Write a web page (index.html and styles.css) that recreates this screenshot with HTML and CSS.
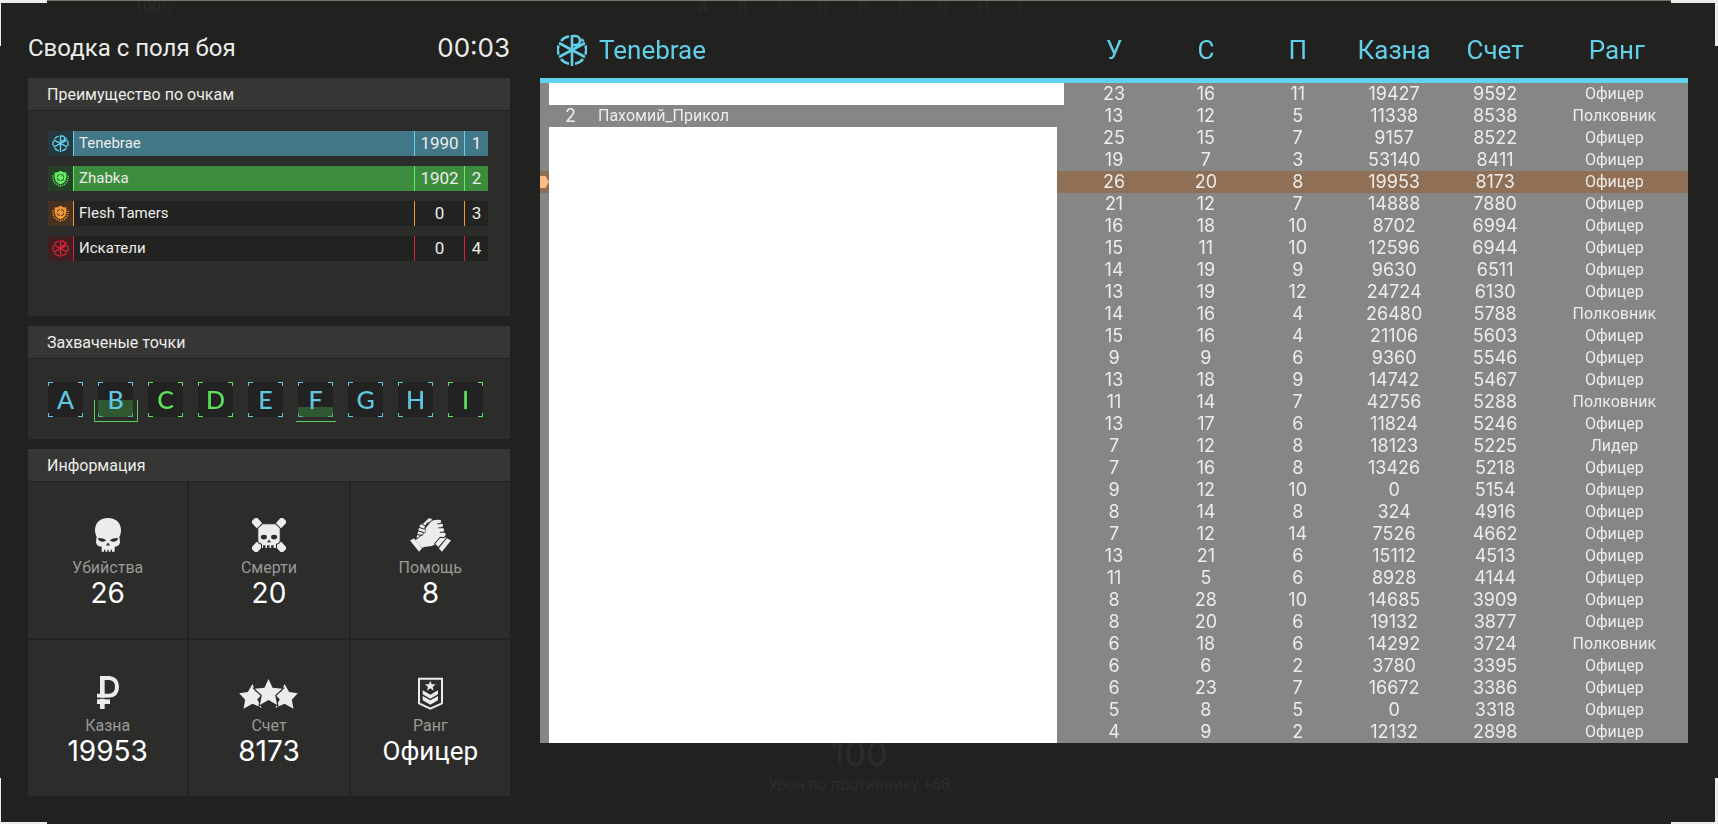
FILE: index.html
```html
<!DOCTYPE html>
<html lang="ru">
<head>
<meta charset="utf-8">
<title>Сводка с поля боя</title>
<meta name="viewport" content="width=device-width, initial-scale=1">
<link rel="stylesheet" href="styles.css">
</head>
<body>
<svg class="defs" aria-hidden="true">
  <symbol id="emblem" viewBox="0 0 30 32">
    <g fill="none" stroke="currentColor" stroke-width="2.6">
      <path d="M12 2.200A14 14 0 0 0 4 7M1.600 11.500A14 14 0 0 0 1.600 20.500M4 25A14 14 0 0 0 12 29.800M18 29.800A14 14 0 0 0 26 25M28.400 20.500A14 14 0 0 0 28.400 11.500M26.500 7.500L24.500 5.200"/>
      <path d="M15 1V32M15 2H18.500A4.500 4.500 0 0 1 18.500 11H15M2 9L28 23M28 9L2 23"/>
    </g>
  </symbol>
  <symbol id="shield" viewBox="0 0 26 26">
    <path fill="currentColor" fill-rule="evenodd" d="M13 1Q17 4 22 4V12Q21 19 13 22Q5 19 4 12V4Q9 4 13 1ZM13 6A5.500 5.500 0 1 0 13 17A5.500 5.500 0 1 0 13 6ZM13 7.300A4.200 4.200 0 1 1 13 15.700A4.200 4.200 0 1 1 13 7.300Z"/>
    <path fill="none" stroke="currentColor" stroke-width="1.500" d="M13 5V9M13 14V18M7 11.500H10.500M15.500 11.500H19"/>
    <circle cx="13" cy="11.500" r="2" fill="currentColor"/>
    <path fill="none" stroke="currentColor" stroke-width="2" stroke-dasharray="2 1.500" d="M1.500 8Q0 21 13 24.500Q26 21 24.500 8"/>
  </symbol>
</svg>

<div class="frame" aria-hidden="true"><i></i><i></i><i></i><i></i></div>
<div class="backdrop" aria-hidden="true"><b>100%</b><span>A</span><span>B</span><span>C</span><span>D</span><span>E</span><span>F</span><span>G</span><span>H</span><span>I</span></div>

<div class="layout">
  <aside class="summary">
    <header class="summary-head"><h1>Сводка с поля боя</h1><time>00:03</time></header>

    <section class="panel">
      <h2>Преимущество по очкам</h2>
      <ol class="clans">
        <li class="clan blue filled"><svg class="clan-icon"><use href="#emblem"/></svg><span class="clan-name">Tenebrae</span><span class="clan-score">1990</span><span class="clan-place">1</span></li>
        <li class="clan green filled"><svg class="clan-icon"><use href="#shield"/></svg><span class="clan-name">Zhabka</span><span class="clan-score">1902</span><span class="clan-place">2</span></li>
        <li class="clan orange"><svg class="clan-icon"><use href="#shield"/></svg><span class="clan-name">Flesh Tamers</span><span class="clan-score">0</span><span class="clan-place">3</span></li>
        <li class="clan red"><svg class="clan-icon"><use href="#emblem"/></svg><span class="clan-name">Искатели</span><span class="clan-score">0</span><span class="clan-place">4</span></li>
      </ol>
    </section>

    <section class="panel">
      <h2>Захваченые точки</h2>
      <ul class="points">
        <li class="point blue">A</li>
        <li class="point blue contested half">B</li>
        <li class="point green">C</li>
        <li class="point green">D</li>
        <li class="point blue">E</li>
        <li class="point blue contested third">F</li>
        <li class="point blue">G</li>
        <li class="point blue">H</li>
        <li class="point green">I</li>
      </ul>
    </section>

    <section class="panel info">
      <h2>Информация</h2>
      <dl class="stats">
        <div class="stat">
          <svg width="26" height="34" viewBox="0 0 78 102"><path fill="currentColor" fill-rule="evenodd" d="M39 0C14 0 0 16 0 37C0 46 3 51 5 57L3 69Q3 82 12 85L20 86V101H27V95H31V101H37V95H41V101H47V95H51V101H59V86L66 85Q75 82 75 69L73 57C76 51 78 46 78 37C78 16 64 0 39 0ZM9 60Q24 59 34 67Q29 72 21 71Q10 70 9 60ZM69 60Q54 59 44 67Q49 72 57 71Q68 70 69 60ZM39 73L45 83H41L39 80L37 83H33Z"/></svg>
          <dt>Убийства</dt><dd>26</dd>
        </div>
        <div class="stat">
          <svg width="34" height="34" viewBox="0 0 100 100"><g fill="currentColor"><rect x="3" y="0" width="22" height="30" rx="8" transform="rotate(-42 14 14)"/><rect x="75" y="0" width="22" height="30" rx="8" transform="rotate(42 86 14)"/><rect x="3" y="70" width="22" height="30" rx="8" transform="rotate(42 14 86)"/><rect x="75" y="70" width="22" height="30" rx="8" transform="rotate(-42 86 86)"/><path fill-rule="evenodd" stroke="#2c2c2a" stroke-width="3" d="M30 17H70L83 30V66Q82 75 72 77V90H62V82H58V90H50V82H46V90H38V82H34V90H28V77Q18 75 17 66V30Z"/></g><g fill="#2c2c2a"><ellipse cx="35" cy="56" rx="9" ry="7"/><ellipse cx="65" cy="56" rx="9" ry="7"/><path d="M50 64L56 71H44Z"/></g></svg>
          <dt>Смерти</dt><dd>20</dd>
        </div>
        <div class="stat">
          <svg width="41" height="34" viewBox="0 0 122 101"><g fill="currentColor"><path d="M0 67L12 60L36 90L27 100ZM122 67L110 60L86 90L95 100Z"/><path d="M20 56L27 28Q29 17 40 16L54 2Q62 -2 66 6L52 15L42 31L46 41L20 60Z"/><path d="M16 66L47 42L46 31L61 12Q70 3 91 6Q96 12 88 16L97 18Q101 24 93 28L100 31Q104 38 98 41L105 45Q109 51 101 55L108 59L84 86L76 77L65 83L42 86L36 89Z"/></g><path fill="none" stroke="#2c2c2a" stroke-width="3" d="M24 27L42 33M22 38L41 43M20 49L37 52M35 18L47 24M52 14L44 30M81 17L91 17M85 29L97 29M89 42L101 42M72 78L90 57L104 59"/></svg>
          <dt>Помощь</dt><dd>8</dd>
        </div>
        <div class="stat">
          <svg width="22" height="34" viewBox="0 0 66 102"><g fill="none" stroke="currentColor"><path stroke-width="14" d="M16 0V99"/><path stroke-width="12" d="M10 6H38Q60 9 60 32Q60 57 36 59H0"/><path stroke-width="14" d="M0 77H39"/></g><path d="M0 67H40" stroke="#2c2c2a" stroke-width="3"/></svg>
          <dt>Казна</dt><dd>19953</dd>
        </div>
        <div class="stat">
          <svg width="59" height="34" viewBox="0 -10 176 102"><g fill="currentColor"><path d="M40 14L48 36L72 43L54 60L68 86L40 73L13 88L18 61L0 42L26 38ZM136 14L128 36L104 43L122 60L108 86L136 73L163 88L158 61L176 42L150 38Z"/><path stroke="#2c2c2a" stroke-width="7" paint-order="stroke" d="M88 -1L100 25L129 28L108 48L114 77L88 62L62 77L68 48L47 28L76 25Z"/></g></svg>
          <dt>Счет</dt><dd>8173</dd>
        </div>
        <div class="stat">
          <svg width="25" height="34" viewBox="0 -5 75 102"><path fill="none" stroke="currentColor" stroke-width="6" d="M3 3H72V77L37 93L3 77Z"/><path fill="currentColor" d="M37 9L41 20H53L44 28L47 39L37 32L27 39L30 28L21 20H33ZM14 38L37 51L60 38V50L37 63L14 50ZM14 55L37 68L60 55V68L37 81L14 68Z"/></svg>
          <dt>Ранг</dt><dd class="word">Офицер</dd>
        </div>
      </dl>
    </section>
  </aside>

  <main class="board">
    <table class="scores">
      <colgroup><col class="c-mark"><col class="c-no"><col class="c-name"><col class="c-num"><col class="c-num"><col class="c-num"><col class="c-wide"><col class="c-wide"><col class="c-rank"></colgroup>
      <thead>
        <tr><th colspan="3" scope="col" class="team"><div><svg width="30" height="32"><use href="#emblem"/></svg>Tenebrae</div></th><th scope="col">У</th><th scope="col">С</th><th scope="col">П</th><th scope="col">Казна</th><th scope="col">Счет</th><th scope="col">Ранг</th></tr>
      </thead>
      <tbody>
        <tr><td></td><td colspan="2"><div class="blank long"></div></td><td>23</td><td>16</td><td>11</td><td>19427</td><td>9592</td><td class="rank">Офицер</td></tr>
        <tr><td></td><td>2</td><td class="name">Пахомий_Прикол</td><td>13</td><td>12</td><td>5</td><td>11338</td><td>8538</td><td class="rank">Полковник</td></tr>
        <tr><td></td><td colspan="2"><div class="blank"></div></td><td>25</td><td>15</td><td>7</td><td>9157</td><td>8522</td><td class="rank">Офицер</td></tr>
        <tr><td></td><td colspan="2"><div class="blank"></div></td><td>19</td><td>7</td><td>3</td><td>53140</td><td>8411</td><td class="rank">Офицер</td></tr>
        <tr class="me"><td><div class="marker"></div></td><td colspan="2"><div class="blank"></div></td><td>26</td><td>20</td><td>8</td><td>19953</td><td>8173</td><td class="rank">Офицер</td></tr>
        <tr><td></td><td colspan="2"><div class="blank"></div></td><td>21</td><td>12</td><td>7</td><td>14888</td><td>7880</td><td class="rank">Офицер</td></tr>
        <tr><td></td><td colspan="2"><div class="blank"></div></td><td>16</td><td>18</td><td>10</td><td>8702</td><td>6994</td><td class="rank">Офицер</td></tr>
        <tr><td></td><td colspan="2"><div class="blank"></div></td><td>15</td><td>11</td><td>10</td><td>12596</td><td>6944</td><td class="rank">Офицер</td></tr>
        <tr><td></td><td colspan="2"><div class="blank"></div></td><td>14</td><td>19</td><td>9</td><td>9630</td><td>6511</td><td class="rank">Офицер</td></tr>
        <tr><td></td><td colspan="2"><div class="blank"></div></td><td>13</td><td>19</td><td>12</td><td>24724</td><td>6130</td><td class="rank">Офицер</td></tr>
        <tr><td></td><td colspan="2"><div class="blank"></div></td><td>14</td><td>16</td><td>4</td><td>26480</td><td>5788</td><td class="rank">Полковник</td></tr>
        <tr><td></td><td colspan="2"><div class="blank"></div></td><td>15</td><td>16</td><td>4</td><td>21106</td><td>5603</td><td class="rank">Офицер</td></tr>
        <tr><td></td><td colspan="2"><div class="blank"></div></td><td>9</td><td>9</td><td>6</td><td>9360</td><td>5546</td><td class="rank">Офицер</td></tr>
        <tr><td></td><td colspan="2"><div class="blank"></div></td><td>13</td><td>18</td><td>9</td><td>14742</td><td>5467</td><td class="rank">Офицер</td></tr>
        <tr><td></td><td colspan="2"><div class="blank"></div></td><td>11</td><td>14</td><td>7</td><td>42756</td><td>5288</td><td class="rank">Полковник</td></tr>
        <tr><td></td><td colspan="2"><div class="blank"></div></td><td>13</td><td>17</td><td>6</td><td>11824</td><td>5246</td><td class="rank">Офицер</td></tr>
        <tr><td></td><td colspan="2"><div class="blank"></div></td><td>7</td><td>12</td><td>8</td><td>18123</td><td>5225</td><td class="rank">Лидер</td></tr>
        <tr><td></td><td colspan="2"><div class="blank"></div></td><td>7</td><td>16</td><td>8</td><td>13426</td><td>5218</td><td class="rank">Офицер</td></tr>
        <tr><td></td><td colspan="2"><div class="blank"></div></td><td>9</td><td>12</td><td>10</td><td>0</td><td>5154</td><td class="rank">Офицер</td></tr>
        <tr><td></td><td colspan="2"><div class="blank"></div></td><td>8</td><td>14</td><td>8</td><td>324</td><td>4916</td><td class="rank">Офицер</td></tr>
        <tr><td></td><td colspan="2"><div class="blank"></div></td><td>7</td><td>12</td><td>14</td><td>7526</td><td>4662</td><td class="rank">Офицер</td></tr>
        <tr><td></td><td colspan="2"><div class="blank"></div></td><td>13</td><td>21</td><td>6</td><td>15112</td><td>4513</td><td class="rank">Офицер</td></tr>
        <tr><td></td><td colspan="2"><div class="blank"></div></td><td>11</td><td>5</td><td>6</td><td>8928</td><td>4144</td><td class="rank">Офицер</td></tr>
        <tr><td></td><td colspan="2"><div class="blank"></div></td><td>8</td><td>28</td><td>10</td><td>14685</td><td>3909</td><td class="rank">Офицер</td></tr>
        <tr><td></td><td colspan="2"><div class="blank"></div></td><td>8</td><td>20</td><td>6</td><td>19132</td><td>3877</td><td class="rank">Офицер</td></tr>
        <tr><td></td><td colspan="2"><div class="blank"></div></td><td>6</td><td>18</td><td>6</td><td>14292</td><td>3724</td><td class="rank">Полковник</td></tr>
        <tr><td></td><td colspan="2"><div class="blank"></div></td><td>6</td><td>6</td><td>2</td><td>3780</td><td>3395</td><td class="rank">Офицер</td></tr>
        <tr><td></td><td colspan="2"><div class="blank"></div></td><td>6</td><td>23</td><td>7</td><td>16672</td><td>3386</td><td class="rank">Офицер</td></tr>
        <tr><td></td><td colspan="2"><div class="blank"></div></td><td>5</td><td>8</td><td>5</td><td>0</td><td>3318</td><td class="rank">Офицер</td></tr>
        <tr><td></td><td colspan="2"><div class="blank"></div></td><td>4</td><td>9</td><td>2</td><td>12132</td><td>2898</td><td class="rank">Офицер</td></tr>
      </tbody>
    </table>
    <div class="ghost"><span class="ghost-value">100</span><span class="ghost-note">Урон по противнику +68</span></div>
  </main>
</div>
</body>
</html>
```
FILE: styles.css
```css
* { box-sizing: border-box; }

body {
  margin: 0;
  min-height: 100vh;
  background: #21211f;
  color: #ececea;
  font-family: Roboto, "Noto Sans", sans-serif;
  font-size: 16px;
  line-height: 22px;
}

h1, h2, ol, ul, dl, dd { margin: 0; padding: 0; list-style: none; font-weight: 400; }

.defs { position: absolute; width: 0; height: 0; }

.blue { --tone: #62d0ee; --tile: #26383e; --fill: #417787; --mark: #62c8e2; }
.green { --tone: #62ee62; --tile: #264028; --fill: #3c8c3e; --mark: #5ce45c; }
.orange { --tone: #f59638; --tile: #463220; --fill: #222221; }
.red { --tone: #d82238; --tile: #401f22; --fill: #222221; }

/* Screen frame */
.frame { position: fixed; inset: 0; border-top: 1px solid #77766d; pointer-events: none; }
.frame i { position: absolute; width: 47px; height: 46px; border: 0 solid #ececea; }
.frame i:nth-child(1) { top: -1px; left: 0; border-width: 3px 0 0 1px; }
.frame i:nth-child(2) { top: -1px; right: 0; border-width: 3px 3px 0 0; }
.frame i:nth-child(3) { bottom: 0; left: 0; border-width: 0 0 2px 1px; }
.frame i:nth-child(4) { bottom: 0; right: 0; border-width: 0 3px 2px 0; }

.backdrop { position: absolute; top: 0; left: 0; right: 0; height: 18px; display: flex; gap: 29px; padding-left: 134px; color: #2a2a28; font-size: 16px; line-height: 16px; }
.backdrop b { width: 535px; font-weight: 400; }
.backdrop span { width: 11px; }

.layout {
  display: grid;
  grid-template-columns: minmax(0, 482fr) minmax(0, 1148fr);
  gap: 30px;
  padding: 0 30px 28px 28px;
}

/* Left column */
.summary { display: flex; flex-direction: column; gap: 10px; }
.summary-head { display: flex; justify-content: space-between; align-items: center; height: 78px; padding-top: 18px; margin-bottom: -10px; }
.summary-head h1 { font-size: 24px; line-height: 32px; }
.summary-head time { font-family: Inter, sans-serif; font-size: 26px; line-height: 32px; }

.panel { background: #2c2c2a; }
.panel h2 { height: 33px; padding: 0 19px; background: #363634; border-bottom: 1px solid #232321; font-size: 16px; line-height: 34px; }

.clans { display: flex; flex-direction: column; gap: 10px; padding: 20px 22px 55px 20px; }
.clan { display: flex; height: 25px; line-height: 25px; }
.clan-icon { width: 25px; height: 25px; padding: 4px; background: var(--tile); color: var(--tone); }
.clan-name, .clan-score, .clan-place { background: var(--fill); border-left: 1px solid var(--tone); }
.clan-name { flex: 1; padding-left: 5px; font-size: 15px; }
.clan-score, .clan-place { font-size: 17px; text-align: center; }
.clan-score { width: 50px; }
.clan-place { width: 24px; }

.points { display: flex; justify-content: space-between; padding: 23px 27px 22px 20px; }
.point {
  position: relative;
  isolation: isolate;
  width: 35px;
  height: 35px;
  color: var(--mark);
  font-family: Lato, sans-serif;
  font-size: 25px;
  font-weight: 500;
  line-height: 34px;
  text-align: center;
  background:
    linear-gradient(var(--mark), var(--mark)) 0 0 / 5px 1px,
    linear-gradient(var(--mark), var(--mark)) 0 0 / 1px 4px,
    linear-gradient(var(--mark), var(--mark)) 100% 0 / 5px 1px,
    linear-gradient(var(--mark), var(--mark)) 100% 0 / 1px 4px,
    linear-gradient(var(--mark), var(--mark)) 0 100% / 5px 1px,
    linear-gradient(var(--mark), var(--mark)) 0 100% / 1px 4px,
    linear-gradient(var(--mark), var(--mark)) 100% 100% / 5px 1px,
    linear-gradient(var(--mark), var(--mark)) 100% 100% / 1px 4px,
    #222222;
  background-repeat: no-repeat;
}
.contested::before { content: ""; position: absolute; z-index: -1; inset: auto 0 0; background: rgba(62, 142, 62, .5); }
.contested::after { content: ""; position: absolute; border: 0 solid #5fce5f; }
.half::before { height: 17px; }
.half::after { inset: 18px -5px -5px -4px; border-width: 0 1px 1px; }
.third::before { height: 10px; }
.third::after { inset: auto -3px -5px -2px; border-width: 0 0 1px; }

.stats { display: grid; grid-template-columns: repeat(3, minmax(0, 1fr)); gap: 2px; background: #232321; }
.stat { display: flex; flex-direction: column; align-items: center; height: 156px; padding-top: 36px; background: #2c2c2a; }
.stat dt { margin-top: 5px; color: #999997; }
.stat dd { color: #fff; font-family: Inter, sans-serif; font-size: 28px; line-height: 28px; }
.stat .word { font-family: Roboto, sans-serif; font-size: 26px; }

/* Score table */
.scores { position: relative; width: 100%; table-layout: fixed; border-collapse: separate; border-spacing: 0; }
.c-mark { width: 9px; }
.c-no { width: 43px; }
.c-num { width: 8%; }
.c-wide { width: 8.8%; }
.c-rank { width: 12.4%; }
.scores th { height: 83px; padding: 22px 0 0; border-bottom: 5px solid #5fd3f0; color: #62cfe8; font-size: 26px; line-height: 32px; font-weight: 400; text-align: center; }
.scores .team div { display: flex; align-items: center; gap: 12px; padding-left: 17px; }
.scores td { height: 22px; padding: 0; background: #868684; font-family: Inter, sans-serif; font-size: 18px; line-height: 22px; text-align: center; }
.scores .name, .scores .rank { font-family: Roboto, sans-serif; font-size: 16px; }
.scores .name { padding-left: 6px; text-align: left; }
.scores .rank { padding-right: 5px; }
.scores .me td { background: #8f6f55; }
.blank { height: 22px; width: calc(100% - 11px); background: #fff; }
.long { width: calc(100% - 4px); }
.marker { width: 9px; height: 12px; background: #ffbd85; clip-path: polygon(0 0, 60% 0, 100% 50%, 60% 100%, 0 100%); }

.ghost { display: flex; flex-direction: column; align-items: center; height: 61px; margin-top: -8px; padding-right: 510px; color: #2c2c2a; }
.ghost-value { font-family: Inter, sans-serif; font-size: 34px; line-height: 38px; }
.ghost-note { line-height: 24px; }
```
